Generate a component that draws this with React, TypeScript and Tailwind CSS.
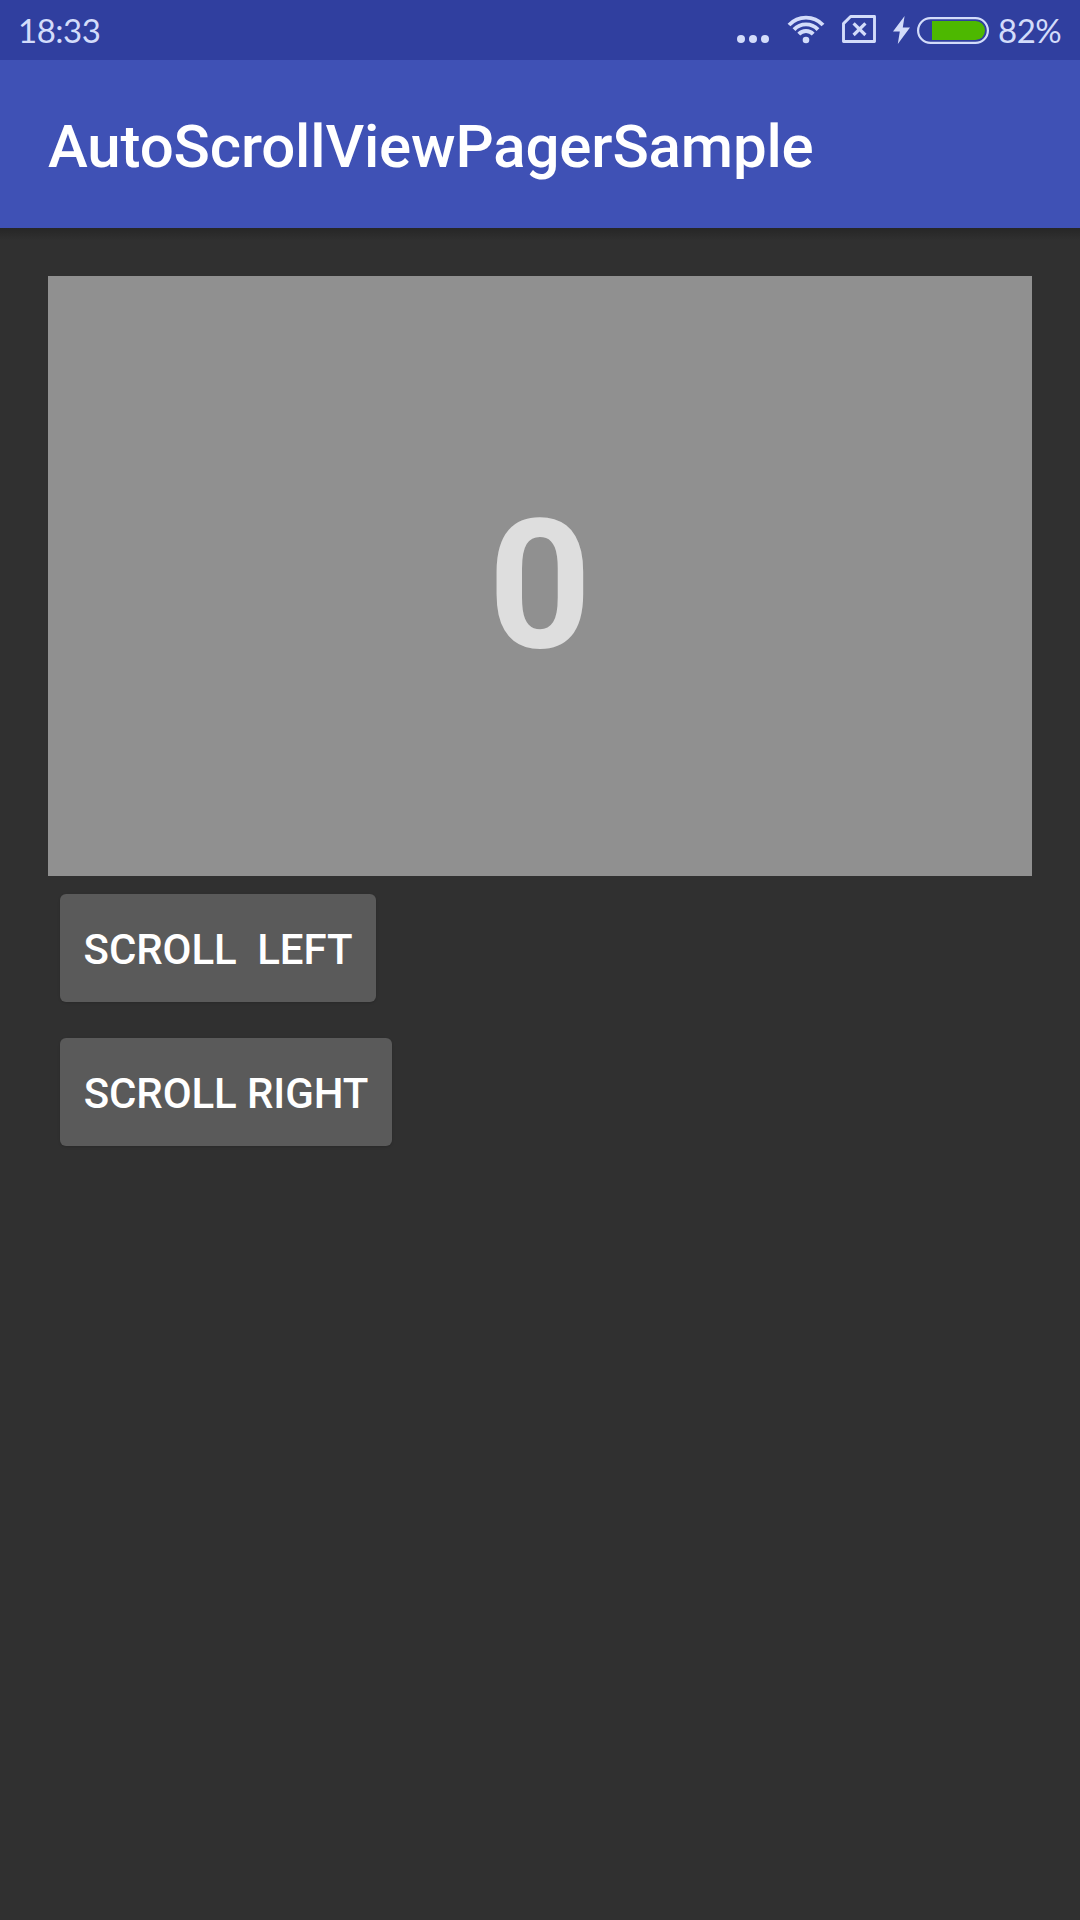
function WifiIcon() {
  return (
    <svg className="h-[29px] w-[38px]" viewBox="0 0 38 29" fill="none" stroke="#d3dcfa" strokeWidth="3.9">
      <path d="M2 10A23.2 23.2 0 0 1 36 10" />
      <path d="M7 14.6A16.4 16.4 0 0 1 31 14.600" />
      <path d="M11.800 19.100A9.800 9.800 0 0 1 26.200 19.100" />
      <circle cx="19" cy="25" r="3.3" fill="#d3dcfa" stroke="none" />
    </svg>
  );
}

function NoSimIcon() {
  return (
    <svg className="h-7 w-[34px]" viewBox="0 0 34 28" fill="none" stroke="#d3dcfa" strokeWidth="2.9">
      <path d="M8.6 1.5H32.5V26.5H1.5V8.6Z" strokeLinejoin="round" />
      <path d="M11.600 8.400 23.400 20M23.400 8.400 11.600 20" strokeWidth="3.2" />
    </svg>
  );
}

function BoltIcon() {
  return (
    <svg className="h-7 w-[17px]" viewBox="0 0 17 28" fill="#d3dcfa">
      <path d="M11.600 0 0 15.600H6.800L4.800 28 17 11.600H9.800Z" />
    </svg>
  );
}

function BatteryIcon() {
  return (
    <svg className="h-[27px] w-[72px]" viewBox="0 0 72 27" fill="none">
      <rect x="1.1" y="1.1" width="69.8" height="24.8" rx="12.4" stroke="#d3dcfa" strokeWidth="2.2" />
      <path d="M15 4H58.500a9.500 9.500 0 0 1 0 19H15Z" fill="#4db800" />
    </svg>
  );
}

function StatusBar() {
  return (
    <div className="flex h-[60px] items-start bg-[#303f9f] font-[Lato,sans-serif] text-[33px] leading-[40px] tracking-[-0.5px] text-[#d3dcfa]">
      <span className="ml-[18px] mt-[10px] w-[90px] whitespace-nowrap">18:33</span>
      <div className="ml-[629px] mt-[35px] flex gap-1">
        <span className="size-2 rounded-full bg-[#d3dcfa]" />
        <span className="size-2 rounded-full bg-[#d3dcfa]" />
        <span className="size-2 rounded-full bg-[#d3dcfa]" />
      </div>
      <div className="ml-[18px] mt-[15px]"><WifiIcon /></div>
      <div className="ml-[17px] mt-[15px]"><NoSimIcon /></div>
      <div className="ml-[17px] mt-4"><BoltIcon /></div>
      <div className="ml-[7px] mt-[17px]"><BatteryIcon /></div>
      <span className="ml-[9px] mt-[10px] whitespace-nowrap">82%</span>
    </div>
  );
}

export default function App() {
  return (
    <div className="flex h-[1920px] w-[1080px] flex-col overflow-hidden bg-[#303030] font-[Roboto,sans-serif]">
      <StatusBar />
      <header className="flex h-[168px] items-center bg-[#3f51b5] pl-12 pt-[5px]">
        <h1 className="text-[60px] font-medium leading-[70px] tracking-[-0.15px] text-white">AutoScrollViewPagerSample</h1>
      </header>
      <div className="h-3 bg-linear-to-b from-[#262626] to-[#303030]" />
      <main className="flex flex-col items-start px-12 pt-9">
        <section className="flex h-[600px] w-full items-center justify-center bg-[#909090] pt-5">
          <span className="text-[180px] font-bold leading-[210px] text-[#dedede]">0</span>
        </section>
        <button className="ml-3 mt-[18px] h-[108px] w-[316px] whitespace-pre rounded-md bg-[#5a5a5a] pt-[2px] text-[42px] font-medium tracking-[-0.1px] text-white shadow-sm">
          {"SCROLL  LEFT"}
        </button>
        <button className="ml-3 mt-9 h-[108px] w-[332px] whitespace-pre rounded-md bg-[#5a5a5a] pt-[2px] text-[42px] font-medium tracking-[-0.1px] text-white shadow-sm">
          SCROLL RIGHT
        </button>
      </main>
    </div>
  );
}
